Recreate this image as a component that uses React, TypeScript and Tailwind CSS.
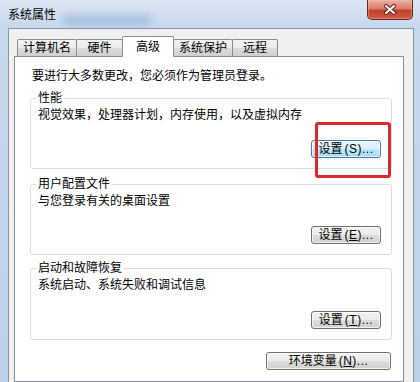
import React from 'react';

interface BtnProps {
  label: string;
  mnemonic: string;
  width: string;
  focused?: boolean;
  underline?: boolean;
}

function Btn({ label, mnemonic, width, focused = false, underline = true }: BtnProps) {
  const skin = focused
    ? 'border-[#3c7fb1] bg-[linear-gradient(to_bottom,#eaf6fd_0%,#d9f0fc_50%,#bee6fd_50%,#a7d9f5_100%)]'
    : 'border-[#707070] bg-[linear-gradient(to_bottom,#f2f2f2_0%,#ebebeb_50%,#dddddd_50%,#cfcfcf_100%)]';
  return (
    <button
      className={`${width} h-[18px] border rounded-[3px] ${skin} shadow-[inset_0_0_0_1px_rgba(255,255,255,0.7)] flex items-center justify-center text-[12px] leading-[14px] text-black`}
    >
      <span>{label}</span>
      <span className="ml-[2px] tracking-[0.5px]">
        (<span className={underline ? 'underline underline-offset-1' : ''}>{mnemonic}</span>)...
      </span>
    </button>
  );
}

interface GroupProps {
  title: string;
  desc: string;
  className: string;
  btnGap: string;
  children: React.ReactNode;
}

function Group({ title, desc, className, btnGap, children }: GroupProps) {
  return (
    <fieldset className={`${className} border border-[#d5dfe5] rounded-[3px] pl-[5px] pr-[10px] pb-[10px]`}>
      <legend className="px-[2px] leading-[14px]">{title}</legend>
      <div className="mt-[3px] ml-[2px]">{desc}</div>
      <div className={`${btnGap} flex justify-end`}>{children}</div>
    </fieldset>
  );
}

const tabs = [
  { label: '计算机名', w: 'w-[60px]' },
  { label: '硬件', w: 'w-[47px]' },
  { label: '高级', w: 'w-[52px]', active: true },
  { label: '系统保护', w: 'w-[60px]' },
  { label: '远程', w: 'w-[46px]' },
];

export default function App() {
  return (
    <div className="relative w-[420px] h-[382px] overflow-hidden flex flex-col bg-[linear-gradient(to_bottom,#dce7f3,#c6d8ec_28px,#bcd1e8)] font-['Liberation_Sans','Noto_Sans_CJK_SC',sans-serif] text-[12px] leading-[14px] text-black">
      {/* Title bar */}
      <div className="relative h-[28px] shrink-0 flex items-start justify-between">
        <div className="absolute left-[62px] top-[15px] w-[90px] h-[10px] rounded-full bg-[#6f8fbb] opacity-40 blur-[4px]" />
        <span className="relative ml-[8px] mt-[8px]">系统属性</span>
        <div className="relative mr-[7px] w-[46px] h-[20px] rounded-b-[5px] border border-t-0 border-[#5e2a22] bg-[linear-gradient(to_bottom,#eab0a2_0%,#dc7c66_45%,#c2412b_55%,#d35a42_100%)] shadow-[inset_0_0_0_1px_rgba(255,200,190,0.35)] flex items-center justify-center">
          <svg width="14" height="11" viewBox="0 0 14 11">
            <path d="M3 2 L11 9 M11 2 L3 9" stroke="#5a1d15" strokeWidth="4" strokeLinecap="round" />
            <path d="M3 2 L11 9 M11 2 L3 9" stroke="#ffffff" strokeWidth="2.2" strokeLinecap="round" />
          </svg>
        </div>
      </div>

      {/* Dialog body */}
      <div className="flex-1 ml-[8px] mr-[6px] flex flex-col border border-b-0 border-[#8797ab] bg-[#f0f0f0] pl-[5px] pr-[9px] pt-[7px]">
        {/* Tabs */}
        <div className="flex items-end pl-[3px] h-[20px]">
          {tabs.map((t, i) =>
            t.active ? (
              <div
                key={t.label}
                className={`${t.w} -ml-px relative z-10 -mb-px h-[21px] border border-b-0 border-[#898c95] rounded-t-[2px] bg-white flex items-center justify-center pb-[1px]`}
              >
                {t.label}
              </div>
            ) : (
              <div
                key={t.label}
                className={`${t.w} ${i > 0 ? '-ml-px' : ''} h-[17px] border border-b-0 border-[#898c95] rounded-t-[2px] bg-[linear-gradient(to_bottom,#f3f3f3_0%,#ebebeb_50%,#dddddd_50%,#cfcfcf_100%)] flex items-center justify-center`}
              >
                {t.label}
              </div>
            )
          )}
        </div>

        {/* Panel */}
        <div className="flex-1 border border-[#898c95] bg-white pl-[15px] pr-[11px] pt-[12px]">
          <div className="ml-[2px]">要进行大多数更改，您必须作为管理员登录。</div>

          <Group title="性能" desc="视觉效果，处理器计划，内存使用，以及虚拟内存" className="mt-[8px]" btnGap="mt-[18px]">
            <Btn label="设置" mnemonic="S" width="w-[70px]" focused underline={false} />
          </Group>

          <Group title="用户配置文件" desc="与您登录有关的桌面设置" className="mt-[8px]" btnGap="mt-[18px]">
            <Btn label="设置" mnemonic="E" width="w-[70px]" />
          </Group>

          <Group title="启动和故障恢复" desc="系统启动、系统失败和调试信息" className="mt-[6px]" btnGap="mt-[19px]">
            <Btn label="设置" mnemonic="T" width="w-[70px]" />
          </Group>

          <div className="mt-[12px] mr-[1px] flex justify-end">
            <Btn label="环境变量" mnemonic="N" width="w-[125px]" />
          </div>
        </div>
      </div>

      {/* Red annotation box */}
      <div className="absolute left-[315px] top-[122px] w-[76px] h-[56px] border-[3px] border-[#dc2a2c] rounded-[3px]" />
    </div>
  );
}
